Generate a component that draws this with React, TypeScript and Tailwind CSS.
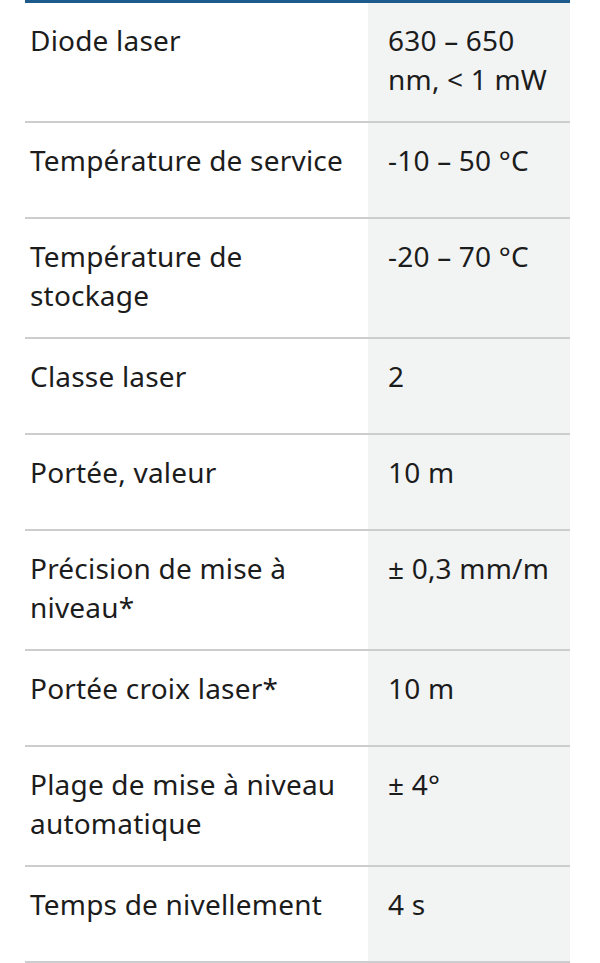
import React from 'react'

const rows: [string, string][] = [
  ['Diode laser', '630 – 650 nm, < 1 mW'],
  ['Température de service', '-10 – 50 °C'],
  ['Température de stockage', '-20 – 70 °C'],
  ['Classe laser', '2'],
  ['Portée, valeur', '10 m'],
  ['Précision de mise à niveau*', '± 0,3 mm/m'],
  ['Portée croix laser*', '10 m'],
  ['Plage de mise à niveau automatique', '± 4°'],
  ['Temps de nivellement', '4 s'],
]

export default function App() {
  return (
    <div className="min-h-[963px] bg-white" style={{ fontFamily: '"Noto Sans", Roboto, sans-serif' }}>
      <div className="ml-[25px] w-[545px] border-t-[3px] border-[#1d5b8c]">
        {rows.map(([label, value]) => (
          <div key={label} className="grid grid-cols-[343px_202px] border-b-2 border-[#cbcdcf]">
            <div className="min-h-[94px] pt-[18px] pb-[22px] pl-[5px] pr-[22px] text-[28px] leading-[39px] tracking-[0.2px] text-[#1c1c1c]">
              {label}
            </div>
            <div className="min-h-[94px] bg-[#f2f4f4] pt-[18px] pb-[22px] px-[20px] text-[28px] leading-[39px] tracking-[0.2px] text-[#1c1c1c]">
              {value}
            </div>
          </div>
        ))}
      </div>
    </div>
  )
}
